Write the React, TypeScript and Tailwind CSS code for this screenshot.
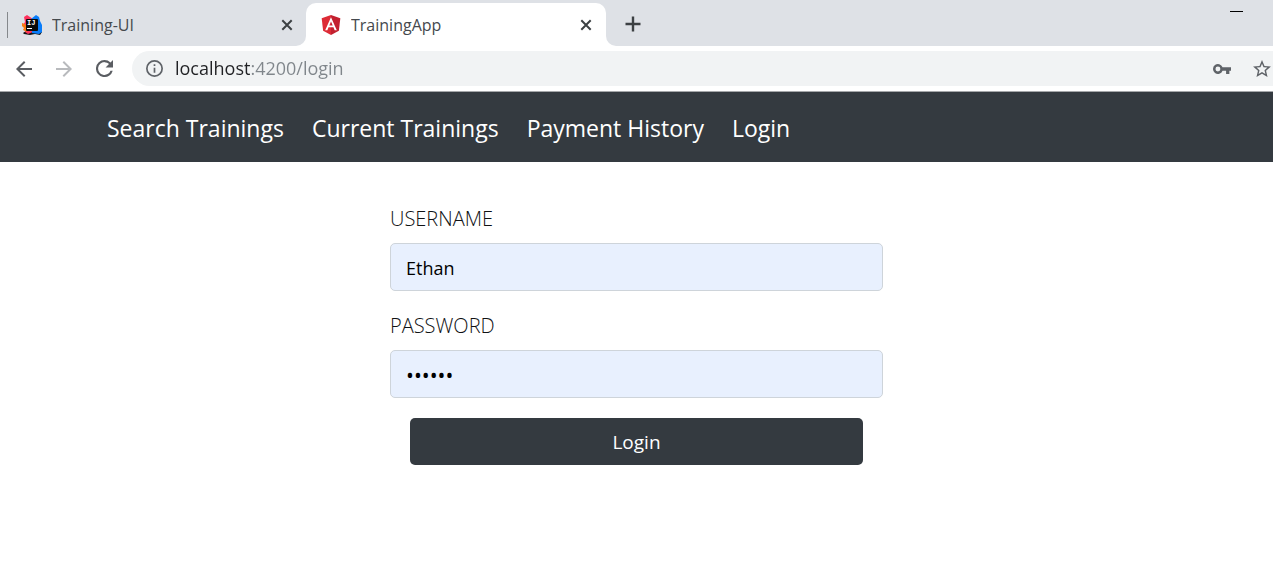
import { useState, type ReactNode } from "react";

function IntelliJIcon() {
  return (
    <svg viewBox="0 0 20 20" className="size-5 shrink-0" aria-hidden="true">
      <path d="M1 18l3-2h10l6 1-2 3-5-1-5 1-6-1z" fill="#141414" />
      <path d="M2 2l3-2 3 2 3 2v13l-5 2-3-2 1-4-3-3 2-3z" fill="#fe315d" />
      <path d="M0 8l3 1 2 3v5l-4-2 1-2-2-2z" fill="#f97a12" />
      <path d="M9 4l5-4 3 2 1 4 2 4v7l-3 2-7-1z" fill="#087cfa" />
      <rect x="4" y="4" width="12" height="12" rx="1" fill="#0a0a0a" />
      <text x="5" y="10" fontSize="7" fontWeight="700" fill="#fff" fontFamily="Liberation Mono, monospace">IJ</text>
      <rect x="5" y="13" width="5" height="1" fill="#fff" />
    </svg>
  );
}

function AngularIcon() {
  return (
    <svg viewBox="31 30 188 200" className="h-5 w-5 shrink-0" aria-hidden="true">
      <path d="M125 30v200l78.9-43.7 14.2-123.1z" fill="#c3202f" />
      <path d="M125 30L31.9 63.2l14.2 123.1L125 230z" fill="#dd2b36" />
      <path
        d="M125 52.1L66.8 182.6h21.7l11.7-29.2h49.4l11.7 29.2H183zm17 83.3h-34l17-40.9z"
        fill="#fff"
      />
    </svg>
  );
}

function CloseIcon() {
  return (
    <svg viewBox="0 0 12 12" className="size-3" fill="none" stroke="#3c4043" strokeWidth="2" aria-hidden="true">
      <path d="M1.3 1.3l9.4 9.4M10.7 1.3l-9.4 9.4" />
    </svg>
  );
}

function Tab({ icon, title }: { icon: ReactNode; title: string }) {
  return (
    <>
      <button type="button" className="flex min-w-0 flex-1 items-center gap-[10px] text-left text-base text-[#45494d]">
        {icon}
        <span className="truncate">{title}</span>
      </button>
      <button type="button" aria-label={"Close " + title} className="flex size-5 items-center justify-center">
        <CloseIcon />
      </button>
    </>
  );
}

function TabStrip() {
  return (
    <div className="flex h-[46px] bg-white">
      <div className="flex w-[306px] items-center rounded-br-[10px] bg-[#dee1e6] pt-1 pr-[9px] pl-[7px]">
        <span className="mr-[14px] h-[26px] w-px bg-[#85888c]" />
        <Tab icon={<IntelliJIcon />} title="Training-UI" />
      </div>
      <div className="w-[300px] bg-[#dee1e6] pt-[3px]">
        <div className="flex h-full items-center rounded-t-[10px] bg-white pr-[10px] pl-[15px]">
          <Tab icon={<AngularIcon />} title="TrainingApp" />
        </div>
      </div>
      <div className="flex flex-1 items-start justify-between rounded-bl-[10px] bg-[#dee1e6] pr-[30px] pl-[17px]">
        <button type="button" aria-label="New tab" className="mt-[14px] flex size-5 items-center justify-center">
          <svg viewBox="0 0 16 16" className="size-4" fill="none" stroke="#3c4043" strokeWidth="2.4" aria-hidden="true">
            <path d="M8 .5v15M.5 8h15" />
          </svg>
        </button>
        <button type="button" aria-label="Minimize" className="flex h-[23px] w-[13px] items-center">
          <span className="h-px w-full bg-black" />
        </button>
      </div>
    </div>
  );
}

function Toolbar() {
  const [url, setUrl] = useState("localhost:4200/login");
  return (
    <div className="flex h-[46px] items-center border-b border-[#a5a7aa] bg-white pl-3">
      <div className="flex gap-4">
        <button type="button" aria-label="Back" className="flex size-6 items-center justify-center text-[#5a5d62]">
          <svg viewBox="4 4 16 16" className="size-4" fill="currentColor" aria-hidden="true">
            <path d="M20 11H7.83l5.59-5.59L12 4l-8 8 8 8 1.41-1.41L7.83 13H20z" />
          </svg>
        </button>
        <button type="button" aria-label="Forward" className="flex size-6 items-center justify-center text-[#b8babd]">
          <svg viewBox="4 4 16 16" className="size-4" fill="currentColor" aria-hidden="true">
            <path d="M12 4l-1.41 1.41L16.17 11H4v2h12.17l-5.58 5.59L12 20l8-8z" />
          </svg>
        </button>
        <button type="button" aria-label="Reload" className="flex size-6 items-center justify-center text-[#5a5d62]">
          <svg viewBox="4 4 16 16" className="size-[17px]" fill="currentColor" aria-hidden="true">
            <path d="M17.65 6.35A7.96 7.96 0 0 0 12 4a8 8 0 1 0 7.73 10h-2.08A6 6 0 1 1 12 6c1.66 0 3.14.69 4.22 1.78L13 11h7V4z" />
          </svg>
        </button>
      </div>
      <div className="ml-4 flex h-[35px] min-w-0 flex-1 items-center rounded-l-full bg-[#f1f3f4] pl-[14px]">
        <svg viewBox="2 2 20 20" className="size-[17px] shrink-0" fill="#5f6368" aria-hidden="true">
          <path d="M11 17h2v-6h-2zm1-15a10 10 0 1 0 0 20 10 10 0 0 0 0-20zm0 18a8 8 0 1 1 0-16 8 8 0 0 1 0 16zM11 9h2V7h-2z" />
        </svg>
        <input
          type="text"
          aria-label="Address"
          value={url}
          onChange={(e) => setUrl(e.target.value)}
          className="ml-3 h-[30px] min-w-0 flex-1 bg-[linear-gradient(90deg,#202124_76px,#80868b_76px)] bg-clip-text pb-[2px] text-[18px] text-transparent caret-black outline-none"
        />
        <button type="button" aria-label="Saved passwords" className="flex w-5 items-center justify-center">
          <svg viewBox="1 6 22 12" className="h-[10px] w-[18px]" fill="#5f6368" aria-hidden="true">
            <path
              fillRule="evenodd"
              d="M12.65 10A6 6 0 1 0 12.65 14H17v4h4v-4h2v-4zM7 15a3 3 0 1 1 0-6 3 3 0 0 1 0 6z"
            />
          </svg>
        </button>
        <button type="button" aria-label="Bookmark this page" className="mr-[2px] ml-[21px] flex w-[18px] items-center justify-center">
          <svg viewBox="2 2 20 19" className="h-[17px] w-[18px]" fill="#5f6368" aria-hidden="true">
            <path d="M22 9.24l-7.19-.62L12 2 9.19 8.63 2 9.24l5.46 4.73L5.82 21 12 17.27 18.18 21l-1.63-7.03zM12 15.4l-3.76 2.27 1-4.28-3.32-2.88 4.38-.38L12 6.1l1.71 4.04 4.38.38-3.32 2.88 1 4.28z" />
          </svg>
        </button>
      </div>
    </div>
  );
}

const links = [
  { label: "Search Trainings", href: "#search" },
  { label: "Current Trainings", href: "#current" },
  { label: "Payment History", href: "#payments" },
  { label: "Login", href: "#login" },
];

function NavBar() {
  return (
    <nav className="bg-[#343a40]">
      <ul className="mx-auto flex h-[70px] max-w-[1059px] items-center gap-7 pt-[2px] text-[23px] text-white">
        {links.map((link) => (
          <li key={link.href}>
            <a href={link.href} className="whitespace-nowrap">
              {link.label}
            </a>
          </li>
        ))}
      </ul>
    </nav>
  );
}

const labelClass = "mb-[9px] block text-[20px] leading-[30px] font-light text-[#101214]";
const inputClass =
  "block h-12 w-full rounded-[5px] border border-[#ced4da] bg-[#e8f0fe] px-[15px] pt-[2px] text-black outline-none";

function LoginForm() {
  const [username, setUsername] = useState("Ethan");
  const [password, setPassword] = useState("secret");
  return (
    <form onSubmit={(e) => e.preventDefault()} className="mx-auto flex max-w-[493px] flex-col gap-5 pt-[42px]">
      <div>
        <label htmlFor="username" className={labelClass}>
          USERNAME
        </label>
        <input
          id="username"
          type="text"
          value={username}
          onChange={(e) => setUsername(e.target.value)}
          className={inputClass + " text-[18px]"}
        />
      </div>
      <div>
        <label htmlFor="password" className={labelClass}>
          PASSWORD
        </label>
        <input
          id="password"
          type="password"
          value={password}
          onChange={(e) => setPassword(e.target.value)}
          className={inputClass + " text-[21px]"}
        />
      </div>
      <button type="submit" className="mx-5 h-[47px] rounded-[5px] bg-[#343a40] pt-[2px] text-[19px] text-white">
        Login
      </button>
    </form>
  );
}

export default function App() {
  return (
    <div className="min-h-screen overflow-x-hidden bg-white font-['Open_Sans','Noto_Sans',sans-serif]">
      <header>
        <TabStrip />
        <Toolbar />
      </header>
      <NavBar />
      <main>
        <LoginForm />
      </main>
    </div>
  );
}
